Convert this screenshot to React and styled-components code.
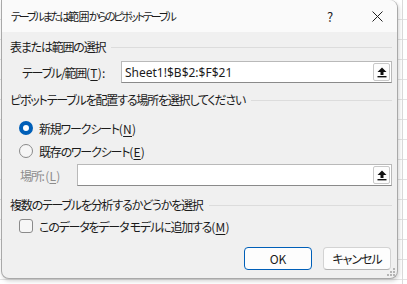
import React from "react";
import styled, { createGlobalStyle } from "styled-components";

const Global = createGlobalStyle`
  html, body { margin: 0; padding: 0; }
  body {
    background-color: #ffffff;
    font-family: "Noto Sans CJK JP", "Noto Sans", sans-serif;
  }
`;

const Screen = styled.div`
  width: 407px;
  height: 284px;
  overflow: hidden;
  background-color: #ffffff;
  background-image:
    linear-gradient(to right, transparent 402px, #dadada 402px, #dadada 403px, transparent 403px),
    repeating-linear-gradient(to bottom, transparent 0, transparent 19px, #e3e3e3 19px, #e3e3e3 20px);
`;

const Dialog = styled.div`
  box-sizing: border-box;
  width: 397px;
  height: 279px;
  margin-left: 1px;
  background: #f0f0f0;
  border: 1px solid #a9a9a9;
  border-top: none;
  border-radius: 0 8px 8px 8px;
  box-shadow: 1px 2px 4px rgba(0, 0, 0, 0.18);
  position: relative;
  font-family: "Noto Sans CJK JP", "Noto Sans", sans-serif;
  font-feature-settings: "palt";
  font-size: 12px;
  letter-spacing: -1.2px;
  color: #1b1b1b;
  display: flex;
  flex-direction: column;
`;

const TitleBar = styled.div`
  height: 32px;
  background: #fafafa;
  border-radius: 0 8px 0 0;
  display: flex;
  align-items: center;
  padding-left: 9px;
`;

const Title = styled.div`
  flex: 1;
  font-size: 11px;
  letter-spacing: -2.1px;
  line-height: 16px;
`;

const TitleKanji = styled.span`
  letter-spacing: -0.6px;
`;

const CaptionButton = styled.div`
  width: ${(p) => p.$w}px;
  margin-right: ${(p) => p.$mr}px;
  height: 32px;
  display: flex;
  align-items: center;
  justify-content: center;
  font-size: 13px;
  letter-spacing: 0;
  color: #222;
`;

const Body = styled.div`
  padding: 0 5px 0 8px;
  display: flex;
  flex-direction: column;
`;

const SectionHeader = styled.div`
  display: flex;
  align-items: center;
  height: 16px;
  margin-top: ${(p) => p.$mt}px;
  line-height: 16px;
  &::after {
    content: "";
    flex: 1;
    height: 1px;
    background: #dcdcdc;
    margin-left: 6px;
  }
`;

const FieldRow = styled.div`
  display: flex;
  align-items: center;
  margin-top: ${(p) => p.$mt}px;
  padding-left: ${(p) => p.$pl}px;
  height: 22px;
`;

const FieldLabel = styled.div`
  width: ${(p) => p.$w}px;
  color: ${(p) => (p.$disabled ? "#8c8c8c" : "#1b1b1b")};
  white-space: nowrap;
`;

const Acc = styled.span`
  letter-spacing: 0.2px;
`;

const U = styled.span`
  text-decoration: underline;
  text-underline-offset: 2px;
`;

const Input = styled.div`
  box-sizing: border-box;
  flex: 1;
  height: 22px;
  background: #ffffff;
  border: 1px solid #b9b9b9;
  border-bottom-color: #8a8a8a;
  display: flex;
  align-items: center;
  padding-left: 3px;
  font-size: 12px;
`;

const InputText = styled.div`
  flex: 1;
  font-family: "Noto Sans", "Liberation Sans", sans-serif;
  font-size: 12px;
  letter-spacing: 0;
`;

const PickButton = styled.div`
  box-sizing: border-box;
  width: 17px;
  height: 18px;
  margin-right: 1px;
  border: 1px solid #c8c8c8;
  border-radius: 2px;
  background: #fdfdfd;
  display: flex;
  align-items: center;
  justify-content: center;
`;

const OptionRow = styled.div`
  display: flex;
  align-items: center;
  height: 20px;
  margin-top: ${(p) => p.$mt}px;
  padding-left: 9px;
  gap: 6px;
`;

const Radio = styled.div`
  box-sizing: border-box;
  width: 14px;
  height: 14px;
  border-radius: 50%;
  border: ${(p) => (p.$checked ? "4px solid #005fb8" : "1px solid #8a8a8a")};
  background: ${(p) => (p.$checked ? "#ffffff" : "#f6f6f6")};
`;

const Check = styled.div`
  box-sizing: border-box;
  width: 14px;
  height: 14px;
  border-radius: 3px;
  border: 1px solid #8a8a8a;
  background: #f6f6f6;
`;

const ButtonRow = styled.div`
  display: flex;
  justify-content: flex-end;
  gap: 11px;
  margin-top: 11px;
  margin-right: 1px;
`;

const Button = styled.div`
  box-sizing: border-box;
  width: 68px;
  height: 23px;
  border-radius: 4px;
  background: #fdfdfd;
  border: 1px solid ${(p) => (p.$primary ? "#005fb8" : "#d3d3d3")};
  border-bottom-color: ${(p) => (p.$primary ? "#005fb8" : "#b3b3b3")};
  display: flex;
  align-items: center;
  justify-content: center;
  font-size: 12px;
  letter-spacing: ${(p) => (p.$primary ? "0" : "-1px")};
`;

const Grip = styled.svg`
  position: absolute;
  right: 2px;
  bottom: 2px;
`;

const UploadIcon = () => (
  <svg width="10" height="11" viewBox="0 0 10 11">
    <path d="M5 0.5 L9.5 5 L6.5 5 L6.5 8 L3.5 8 L3.5 5 L0.5 5 Z" fill="#111" />
    <rect x="0.5" y="9" width="9" height="1.4" fill="#111" />
  </svg>
);

const CloseIcon = () => (
  <svg width="11" height="11" viewBox="0 0 11 11">
    <path d="M0.5 0.5 L10.5 10.5 M10.5 0.5 L0.5 10.5" stroke="#222" strokeWidth="1" />
  </svg>
);

export default function App() {
  return (
    <Screen>
      <Global />
      <Dialog>
        <TitleBar>
          <Title>
            テーブルまたは<TitleKanji>範囲</TitleKanji>からのピボットテーブル
          </Title>
          <CaptionButton $w={46} $mr={4}>?</CaptionButton>
          <CaptionButton $w={40} $mr={0}>
            <CloseIcon />
          </CaptionButton>
        </TitleBar>
        <Body>
          <SectionHeader $mt={7}>表または範囲の選択</SectionHeader>
          <FieldRow $mt={6} $pl={12}>
            <FieldLabel $w={99}>
              テーブル/範囲<Acc>(<U>T</U>):</Acc>
            </FieldLabel>
            <Input>
              <InputText>Sheet1!$B$2:$F$21</InputText>
              <PickButton>
                <UploadIcon />
              </PickButton>
            </Input>
          </FieldRow>
          <SectionHeader $mt={9}>ピボットテーブルを配置する場所を選択してください</SectionHeader>
          <OptionRow $mt={10}>
            <Radio $checked />
            <span>
              新規ワークシート<Acc>(<U>N</U>)</Acc>
            </span>
          </OptionRow>
          <OptionRow $mt={3}>
            <Radio />
            <span>
              既存のワークシート<Acc>(<U>E</U>)</Acc>
            </span>
          </OptionRow>
          <FieldRow $mt={3} $pl={10}>
            <FieldLabel $w={57} $disabled>
              場所<Acc>:(<U>L</U>)</Acc>
            </FieldLabel>
            <Input>
              <InputText />
              <PickButton>
                <UploadIcon />
              </PickButton>
            </Input>
          </FieldRow>
          <SectionHeader $mt={11}>複数のテーブルを分析するかどうかを選択</SectionHeader>
          <OptionRow $mt={3}>
            <Check />
            <span>
              このデータをデータ モデルに追加する<Acc>(<U>M</U>)</Acc>
            </span>
          </OptionRow>
          <ButtonRow>
            <Button $primary>OK</Button>
            <Button>キャンセル</Button>
          </ButtonRow>
        </Body>
        <Grip width="8" height="8" viewBox="0 0 8 8">
          <rect x="6" y="0" width="2" height="2" fill="#b5b5b5" />
          <rect x="3" y="3" width="2" height="2" fill="#b5b5b5" />
          <rect x="6" y="3" width="2" height="2" fill="#b5b5b5" />
          <rect x="0" y="6" width="2" height="2" fill="#b5b5b5" />
          <rect x="3" y="6" width="2" height="2" fill="#b5b5b5" />
          <rect x="6" y="6" width="2" height="2" fill="#b5b5b5" />
        </Grip>
      </Dialog>
    </Screen>
  );
}
